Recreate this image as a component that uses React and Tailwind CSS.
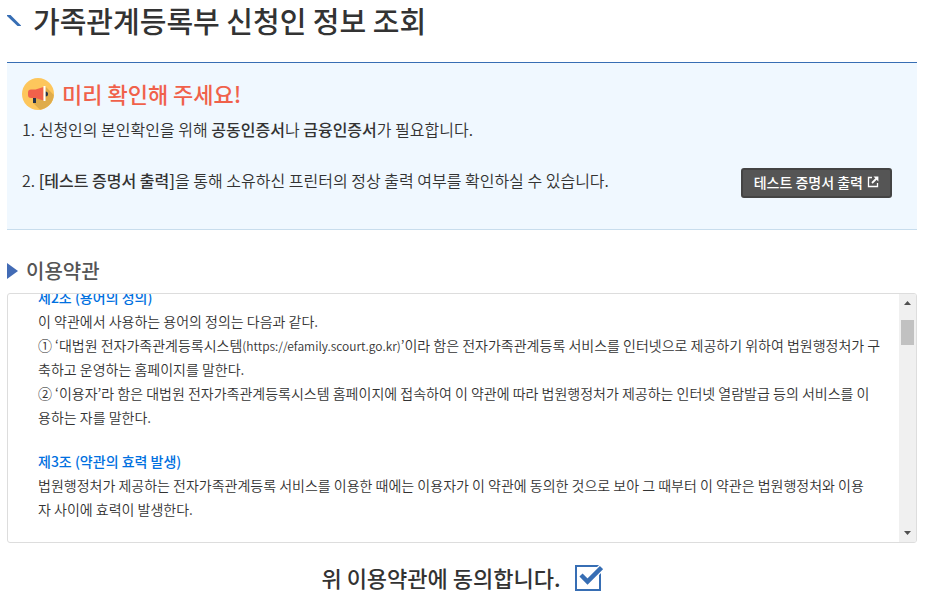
import React, { useState } from "react";

const TERMS = [
  {
    title: "제2조 (용어의 정의)",
    lines: [
      <>이 약관에서 사용하는 용어의 정의는 다음과 같다.</>,
      <>
        ① ‘대법원 전자가족관계등록시스템<span className="text-xs">(https://efamily.scourt.go.kr)</span>’이라 함은 전자가족관계등록 서비스를 인터넷으로 제공하기 위하여 법원행정처가 구
        <br />
        축하고 운영하는 홈페이지를 말한다.
      </>,
      <>
        ② ‘이용자’라 함은 대법원 전자가족관계등록시스템 홈페이지에 접속하여 이 약관에 따라 법원행정처가 제공하는 인터넷 열람발급 등의 서비스를 이
        <br />
        용하는 자를 말한다.
      </>,
    ],
  },
  {
    title: "제3조 (약관의 효력 발생)",
    lines: [
      <>
        법원행정처가 제공하는 전자가족관계등록 서비스를 이용한 때에는 이용자가 이 약관에 동의한 것으로 보아 그 때부터 이 약관은 법원행정처와 이용
        <br />
        자 사이에 효력이 발생한다.
      </>,
    ],
  },
];

function MegaphoneIcon() {
  return (
    <svg viewBox="0 0 32 32" className="w-8 h-8 shrink-0" aria-hidden="true">
      <circle cx="16" cy="16" r="16" fill="#fdc65c" />
      <path d="M23.500 8.500L31.800 17A16 16 0 0 1 18 31.800L11 25L14 19L23 21Z" fill="#dfac4b" />
      <path d="M11 18h3v7h-3z" fill="#24334c" />
      <path d="M23.500 13.500a2.500 2.500 0 0 1 0 5z" fill="#24334c" />
      <path d="M9 11.500h4.500L21.500 9v13.500L13.500 20H9a3 3 0 0 1-3-3v-2.500a3 3 0 0 1 3-3z" fill="#f0614b" />
      <path d="M21.500 8h2v15h-2z" fill="#fff" />
    </svg>
  );
}

function ExternalIcon() {
  return (
    <svg viewBox="0 0 12 12" className="w-3 h-3 shrink-0" fill="none" stroke="currentColor" strokeWidth="1.3" aria-hidden="true">
      <path d="M5 1.500H1.500v9h9V7" />
      <path d="M5 7L10 2" strokeWidth="1.8" />
      <path d="M6.500 .600h4.900V5.500z" fill="currentColor" stroke="none" />
    </svg>
  );
}

export default function App() {
  const [agreed, setAgreed] = useState(true);

  return (
    <main className="bg-white pl-[7px] pr-[17px] font-['Noto_Sans_CJK_KR',sans-serif] text-[#333]">
      {/* Page title */}
      <header className="flex items-center gap-3 pb-[22px] border-b border-[#376eb4]">
        <svg viewBox="0 0 14 12" className="w-3.5 h-3 shrink-0" aria-hidden="true">
          <path d="M0 1h3.500L14 11.500V12h-3.500L0 2z" fill="#376eb4" />
        </svg>
        <h1 className="text-[29px] leading-10 font-medium">가족관계등록부 신청인 정보 조회</h1>
      </header>

      {/* Notice */}
      <section className="bg-[#f0f8ff] border-b border-[#c8dded] pl-[15px] pr-[25px] pt-[15px] pb-[31px]">
        <div className="flex items-start gap-2">
          <MegaphoneIcon />
          <h2 className="text-[22px] leading-[30px] font-medium text-[#f0614b]">미리 확인해 주세요!</h2>
        </div>
        <ol className="text-base leading-6 font-[350]">
          <li className="pt-[7px]">
            1. 신청인의 본인확인을 위해 <strong className="font-medium">공동인증서</strong>나{" "}
            <strong className="font-medium">금융인증서</strong>가 필요합니다.
          </li>
          <li className="flex items-start justify-between pt-[27px]">
            <p>
              2. <strong className="font-medium">[테스트 증명서 출력]</strong>을 통해 소유하신 프린터의 정상 출력 여부를 확인하실 수 있습니다.
            </p>
            <button
              type="button"
              className="flex items-center gap-1 h-[30px] px-[11px] pb-0.5 rounded-[3px] border-2 border-[#444] bg-[#555] text-white text-sm font-medium whitespace-nowrap"
            >
              테스트 증명서 출력
              <ExternalIcon />
            </button>
          </li>
        </ol>
      </section>

      {/* Terms of use */}
      <section className="pt-[25px]">
        <div className="flex items-center gap-2 pb-1.5">
          <svg viewBox="0 0 11 16" className="w-[11px] h-4 shrink-0" aria-hidden="true">
            <path d="M0 0L11 8L0 16z" fill="#426bb5" />
          </svg>
          <h2 className="text-xl leading-8 font-medium text-[#555]">이용약관</h2>
        </div>

        <div className="flex h-[250px] overflow-hidden rounded-[3px] border border-[#ddd]">
          <div className="flex-1 min-w-0 overflow-hidden pl-[30px] pr-1 text-sm leading-6 break-all">
            <div className="-mt-[9px] flex flex-col gap-5">
              {TERMS.map((term) => (
                <article key={term.title}>
                  <h3 className="font-medium text-[#0070e0]">{term.title}</h3>
                  {term.lines.map((line, index) => (
                    <p key={index} className="font-[350]">{line}</p>
                  ))}
                </article>
              ))}
            </div>
          </div>

          <div className="flex w-[17px] shrink-0 flex-col items-center bg-[#f0f0f0] text-[#505050]" aria-hidden="true">
            <svg viewBox="0 0 17 17" className="w-[17px] h-[17px]">
              <path d="M5 11L8.500 7L12 11z" fill="currentColor" />
            </svg>
            <div className="mt-[9px] h-[25px] w-[13px] bg-[#c1c1c1]" />
            <svg viewBox="0 0 17 17" className="mt-auto w-[17px] h-[17px]">
              <path d="M5 6L8.500 10L12 6z" fill="currentColor" />
            </svg>
          </div>
        </div>
      </section>

      {/* Agreement */}
      <div className="flex justify-center pt-[18px]">
        <label className="flex items-end gap-3.5 text-[22px] leading-8 font-medium">
          위 이용약관에 동의합니다.
          <span className="relative flex w-7 h-7">
            <input
              type="checkbox"
              checked={agreed}
              onChange={(e) => setAgreed(e.target.checked)}
              className="appearance-none w-[26px] h-[26px] border-2 border-[#376eb4] bg-white"
            />
            {agreed && (
              <svg viewBox="0 0 28 26" className="absolute inset-0 w-7 h-[26px] pointer-events-none" aria-hidden="true">
                <path d="M5 9L12.500 16.500L28 1" fill="none" stroke="#fff" strokeWidth="7" />
                <path d="M6 10L12.500 16.500L26.500 2.500" fill="none" stroke="#376eb4" strokeWidth="4.5" />
              </svg>
            )}
          </span>
        </label>
      </div>
    </main>
  );
}
